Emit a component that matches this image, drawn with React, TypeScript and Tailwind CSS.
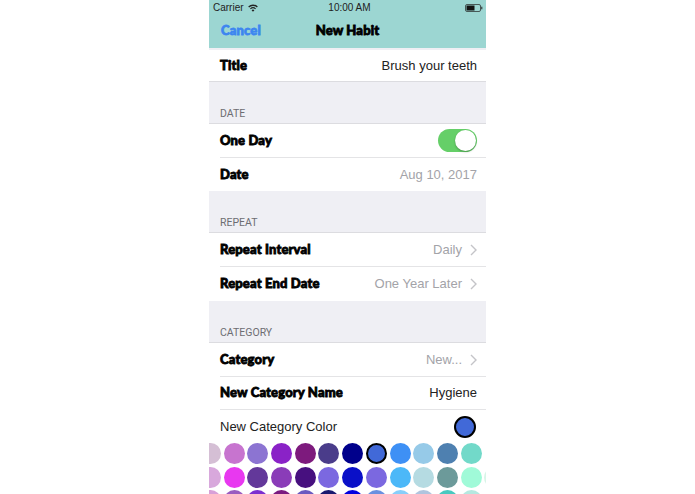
const heavy = "font-['Lato',sans-serif] font-black tracking-[0.15px] [-webkit-text-stroke:0.8px_currentColor]";

const swatches = [
  ['#d5bfd5', '#c774cf', '#8c74d2', '#8a22c7', '#7d1a7d', '#4a3c8a', '#00008b', '#4169d8', '#3e90f5', '#96cae8', '#4e80b0', '#72d9c9', '#ffffff'],
  ['#d8a8dc', '#e838f0', '#63389a', '#8a3cb8', '#47107f', '#7b68e0', '#0a10c8', '#7b68e0', '#4cb8f8', '#b5dbe2', '#6c9a9a', '#a0fad8', '#d8f5e8'],
  ['#d8a0d8', '#9a5cc0', '#7b30d0', '#7a1a80', '#6a5ac0', '#191970', '#0000e0', '#6a90e0', '#87cefa', '#b0c4de', '#48c9c0', '#b5e8e0', '#e0f5f0'],
];

function Chevron() {
  return (
    <svg width="7" height="12" viewBox="0 0 7 12" className="ml-[8px] shrink-0" fill="none">
      <path d="M1 1l5 5-5 5" stroke="#c4c4c8" strokeWidth="1.4" />
    </svg>
  );
}

function Row({ label, value, muted, chevron, h = 'h-[33px]', border = true }: { label: string; value: string; muted?: boolean; chevron?: boolean; h?: string; border?: boolean }) {
  return (
    <div className={`flex items-center ${h} ml-[11px] pr-[9px] ${border ? 'border-b border-[#e4e4e6]' : ''}`}>
      <span className={`text-[13px] text-black ${heavy}`}>{label}</span>
      <span className={`ml-auto text-[13px] ${muted ? 'text-[#a3a3a8]' : 'text-[#222]'}`}>{value}</span>
      {chevron && <Chevron />}
    </div>
  );
}

function Section({ title }: { title: string }) {
  return (
    <div className="h-[42px] bg-[#efeff4] border-b border-[#dcdce0] flex items-end pl-[11px] pb-[2px]">
      <span className="font-['Roboto',sans-serif] text-[10.5px] leading-[14px] text-[#6d6d72]">{title}</span>
    </div>
  );
}

export default function App() {
  return (
    <div className="w-[695px] h-[494px] bg-white overflow-hidden">
      <div className="w-[277px] h-[494px] mx-auto overflow-hidden bg-white font-['Liberation_Sans',sans-serif]">
        {/* status + nav */}
        <div className="bg-[#9cd6d2] h-[48px]">
          <div className="grid grid-cols-3 items-center h-[14px] pl-[4px] pr-[3px] text-[10px] text-[#222]">
            <span className="flex items-center gap-[4px]">
              Carrier
              <svg width="10" height="8" viewBox="0 0 10 8" fill="#222">
                <path d="M5 7.8L3.6 6.2a2 2 0 012.8 0zM2.8 5.3L2 4.4a4.4 4.4 0 016 0l-.8.9a3.2 3.2 0 00-4.4 0zM1.1 3.5L.2 2.5a6.9 6.9 0 019.6 0l-.9 1a5.6 5.6 0 00-7.8 0z" />
              </svg>
            </span>
            <span className="text-center pl-[3px]">10:00 AM</span>
            <svg width="18" height="8" viewBox="0 0 18 8" fill="none" className="justify-self-end">
              <rect x="0.5" y="0.5" width="15" height="7" rx="1.5" stroke="#222" strokeWidth="0.7" />
              <rect x="1.5" y="1.5" width="8" height="5" fill="#111" />
              <rect x="16.3" y="2.7" width="1" height="2.6" fill="#222" />
            </svg>
          </div>
          <div className="relative flex items-center justify-center h-[34px]">
            <span className={`absolute left-[12px] text-[13px] text-[#3d86f0] ${heavy}`}>Cancel</span>
            <span className={`text-[13px] text-black ${heavy}`}>New Habit</span>
          </div>
        </div>
        <div className="h-[2px] bg-[#efeff4]" />
        <div className="border-b border-[#dcdce0]">
          <div className="flex items-center h-[31px] ml-[11px] pr-[9px]">
            <span className={`text-[13px] text-black ${heavy}`}>Title</span>
            <span className="ml-auto text-[13px] text-[#222]">Brush your teeth</span>
          </div>
        </div>
        <Section title="DATE" />
        <div className="flex items-center h-[34px] ml-[11px] pr-[9px] border-b border-[#e4e4e6]">
          <span className={`text-[13px] text-black ${heavy}`}>One Day</span>
          <div className="ml-auto w-[39px] h-[23px] rounded-full bg-[#65cf68] flex justify-end items-center pr-[1px]">
            <div className="w-[21px] h-[21px] rounded-full bg-white shadow-[0_1px_2px_rgba(0,0,0,0.3)]" />
          </div>
        </div>
        <Row label="Date" value="Aug 10, 2017" muted border={false} />
        <Section title="REPEAT" />
        <Row label="Repeat Interval" value="Daily" muted chevron h="h-[34px]" />
        <Row label="Repeat End Date" value="One Year Later" muted chevron h="h-[34px]" border={false} />
        <Section title="CATEGORY" />
        <Row label="Category" value="New..." muted chevron h="h-[34px]" />
        <Row label="New Category Name" value="Hygiene" />
        <div className="flex items-center h-[33px] ml-[11px] pr-[10px]">
          <span className="text-[13px] text-[#222]">New Category Color</span>
          <div className="ml-auto w-[22px] h-[22px] rounded-full bg-[#4169d8] border-2 border-black" />
        </div>
        {/* colour grid */}
        <div className="-ml-[9px] flex flex-col gap-[2.7px]">
          {swatches.map((row, i) => (
            <div key={i} className="flex gap-[2.7px]">
              {row.map((c, j) => (
                <div
                  key={j}
                  className={`w-[21px] h-[21px] shrink-0 rounded-full ${i === 0 && j === 7 ? 'border-2 border-black' : ''}`}
                  style={{ backgroundColor: c }}
                />
              ))}
            </div>
          ))}
        </div>
      </div>
    </div>
  );
}
